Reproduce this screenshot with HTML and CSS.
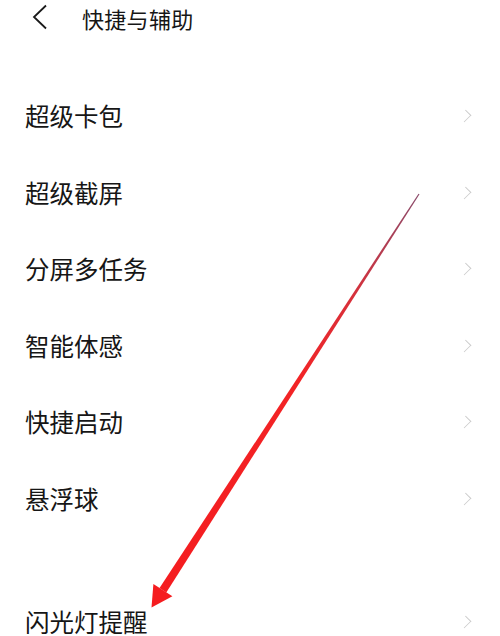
FILE: index.html
```html
<!DOCTYPE html>
<html lang="zh-CN">
<head>
<meta charset="utf-8">
<title>快捷与辅助</title>
<link rel="stylesheet" href="styles.css">
</head>
<body>
<div class="page">
  <header class="topbar">
    <span class="back">
      <svg width="16" height="26" viewBox="0 0 16 26"><path d="M14 1.5 L2 13 L14 24.5" fill="none" stroke="#1a1a1a" stroke-width="1.8" stroke-linejoin="miter"/></svg>
    </span>
    <h1 class="title">快捷与辅助</h1>
  </header>

  <ul class="list">
    <li class="row"><span class="label">超级卡包</span><span class="chev"></span></li>
    <li class="row"><span class="label">超级截屏</span><span class="chev"></span></li>
    <li class="row"><span class="label">分屏多任务</span><span class="chev"></span></li>
    <li class="row"><span class="label">智能体感</span><span class="chev"></span></li>
    <li class="row"><span class="label">快捷启动</span><span class="chev"></span></li>
    <li class="row"><span class="label">悬浮球</span><span class="chev"></span></li>
  </ul>

  <ul class="list list-second">
    <li class="row row-last"><span class="label">闪光灯提醒</span><span class="chev"></span></li>
  </ul>

  <svg class="arrow" width="500" height="636" viewBox="0 0 500 636">
    <defs>
      <linearGradient id="ag" x1="419" y1="194" x2="152" y2="607" gradientUnits="userSpaceOnUse">
        <stop offset="0" stop-color="#8a4a6a"/>
        <stop offset="0.25" stop-color="#d8303a"/>
        <stop offset="0.45" stop-color="#f22426"/>
        <stop offset="1" stop-color="#f51c1f"/>
      </linearGradient>
    </defs>
    <polygon fill="url(#ag)" points="419.5,194.3 418.5,193.7 159.5,588 166.3,592.4"/>
    <polygon fill="#f51c1f" points="151.5,607.5 153.4,583.9 172.4,596.3"/>
  </svg>
</div>
</body>
</html>
```

FILE: styles.css
```css
html, body {
  margin: 0;
  padding: 0;
  background: #ffffff;
}

body {
  font-family: "Noto Sans CJK SC", "Noto Sans", sans-serif;
  color: #161616;
}

.page {
  position: relative;
  width: 500px;
  height: 636px;
  overflow: hidden;
}

.topbar {
  display: flex;
  align-items: center;
  height: 36px;
  padding-left: 32px;
}

.back {
  display: flex;
  align-items: center;
  width: 16px;
  height: 36px;
  margin-top: -2px;
}

.title {
  margin: 0 0 0 34px;
  font-size: 22px;
  font-weight: 400;
  line-height: 36px;
  letter-spacing: 0.3px;
}

.list {
  list-style: none;
  margin: 0;
  padding: 0;
  margin-top: 42px;
}

.list-second {
  margin-top: 47px;
}

.row {
  display: flex;
  align-items: center;
  justify-content: space-between;
  height: 76.5px;
  padding: 0 28px 0 25px;
}

.row-last {
  height: 52px;
  align-items: flex-start;
  padding-top: 26px;
  box-sizing: border-box;
}

.row-last .chev {
  margin-top: 7px;
}

.label {
  font-size: 24.5px;
  line-height: 1;
}

.chev {
  width: 9px;
  height: 9px;
  border-top: 1.3px solid #cacaca;
  border-right: 1.3px solid #cacaca;
  transform: rotate(45deg) scaleX(0.8);
  margin-right: 2px;
}

.arrow {
  position: absolute;
  left: 0;
  top: 0;
  pointer-events: none;
}
```
